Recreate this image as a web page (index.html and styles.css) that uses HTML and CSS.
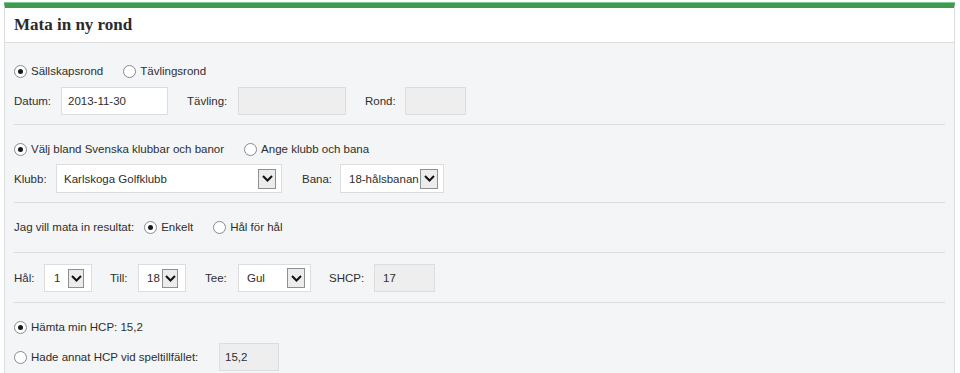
FILE: index.html
```html
<!DOCTYPE html>
<html lang="sv">
<head>
<meta charset="utf-8">
<title>Mata in ny rond</title>
<link rel="stylesheet" href="styles.css">
</head>
<body>
<div class="panel">
  <div class="header"><h1 class="title">Mata in ny rond</h1></div>
  <div class="content">
    <div class="section s1">
      <div class="row">
        <span class="opt"><span class="radio checked"></span>Sällskapsrond</span>
        <span class="opt"><span class="radio"></span>Tävlingsrond</span>
      </div>
      <div class="row fields f28">
        <span class="lbl w-datum">Datum:</span>
        <span class="input w107 pad6">2013-11-30</span>
        <span class="lbl w-tavling ml19">Tävling:</span>
        <span class="input gray w108"></span>
        <span class="lbl w-rond ml19">Rond:</span>
        <span class="input gray w61"></span>
      </div>
    </div>
    <div class="section s2">
      <div class="row">
        <span class="opt"><span class="radio checked"></span>Välj bland Svenska klubbar och banor</span>
        <span class="opt"><span class="radio"></span>Ange klubb och bana</span>
      </div>
      <div class="row fields f29">
        <span class="lbl w-klubb">Klubb:</span>
        <span class="select w226 pad7"><span class="val">Karlskoga Golfklubb</span><span class="arrow"><svg width="11" height="7" viewBox="0 0 11 7"><path d="M1 1l4.5 4.5L10 1" fill="none" stroke="#111" stroke-width="2"/></svg></span></span>
        <span class="lbl w-bana ml20">Bana:</span>
        <span class="select w104 pad8"><span class="val">18-hålsbanan</span><span class="arrow"><svg width="11" height="7" viewBox="0 0 11 7"><path d="M1 1l4.5 4.5L10 1" fill="none" stroke="#111" stroke-width="2"/></svg></span></span>
      </div>
    </div>
    <div class="section s3">
      <div class="row">
        <span class="lbl mr10">Jag vill mata in resultat:</span>
        <span class="opt"><span class="radio checked"></span>Enkelt</span>
        <span class="opt"><span class="radio"></span>Hål för hål</span>
      </div>
    </div>
    <div class="section s4">
      <div class="row f28">
        <span class="lbl w-hal">Hål:</span>
        <span class="select w48 pad9 sm"><span class="val">1</span><span class="arrow"><svg width="11" height="7" viewBox="0 0 11 7"><path d="M1 1l4.5 4.5L10 1" fill="none" stroke="#111" stroke-width="2"/></svg></span></span>
        <span class="lbl w-till ml18">Till:</span>
        <span class="select w48 pad8 sm"><span class="val">18</span><span class="arrow"><svg width="11" height="7" viewBox="0 0 11 7"><path d="M1 1l4.5 4.5L10 1" fill="none" stroke="#111" stroke-width="2"/></svg></span></span>
        <span class="lbl w-tee ml19">Tee:</span>
        <span class="select w73 pad8"><span class="val">Gul</span><span class="arrow"><svg width="11" height="7" viewBox="0 0 11 7"><path d="M1 1l4.5 4.5L10 1" fill="none" stroke="#111" stroke-width="2"/></svg></span></span>
        <span class="lbl w-shcp ml18">SHCP:</span>
        <span class="input gray w61 pad8">17</span>
      </div>
    </div>
    <div class="section s5">
      <div class="row">
        <span class="opt"><span class="radio checked"></span>Hämta min HCP: 15,2</span>
      </div>
      <div class="row fields f28 hcp">
        <span class="opt w-hade"><span class="radio"></span>Hade annat HCP vid speltillfället:</span>
        <span class="input gray w60 pad5">15,2</span>
      </div>
    </div>
  </div>
</div>
</body>
</html>
```
FILE: styles.css
```css
html, body {
  margin: 0;
  padding: 0;
  background: #ffffff;
}
body {
  font-family: "Liberation Sans", Arial, sans-serif;
  font-size: 11.5px;
  color: #2e2e2e;
  height: 373px;
  overflow: hidden;
}
.panel {
  margin: 3px 0 0 4px;
  width: 949px;
  border-left: 1px solid #dddddd;
  border-right: 1px solid #dddddd;
  border-top: 5px solid #3f9b52;
  box-shadow: 0 -1px 0 #86c893;
  background: #f4f5f7;
}
.header {
  height: 34px;
  background: #ffffff;
  border-bottom: 1px solid #dcdcdc;
  display: flex;
  align-items: center;
  padding-left: 9px;
}
.title {
  margin: 0;
  font-family: "Liberation Serif", "Times New Roman", serif;
  font-weight: bold;
  font-size: 17px;
  color: #2b2b2b;
}
.content {
  padding: 0 9px;
}
.section {
  border-bottom: 1px solid #dcdcdc;
}
.section:last-child {
  border-bottom: none;
}
.s1 { padding: 20px 0 9px; }
.s2 { padding: 16px 0 9px; }
.s3 { padding: 16px 0 17px; }
.s4 { padding: 11px 0 10px; }
.s5 { padding: 16px 0 0; height: 70px; }
.row {
  display: flex;
  align-items: center;
  height: 16px;
}
.row.fields { margin-top: 8px; }
.s2 .row.fields { margin-top: 7px; }
.row.f28 { height: 28px; }
.row.f29 { height: 29px; }
.opt {
  display: inline-flex;
  align-items: center;
  margin-right: 20px;
  white-space: nowrap;
}
.radio {
  width: 11px;
  height: 11px;
  border: 1px solid #8a8a8a;
  border-radius: 50%;
  background: #ffffff;
  margin-right: 4px;
  position: relative;
  flex: none;
}
.radio.checked::after {
  content: "";
  position: absolute;
  left: 3px;
  top: 3px;
  width: 5px;
  height: 5px;
  border-radius: 50%;
  background: #1a1a1a;
}
.lbl { flex: none; white-space: nowrap; }
.mr10 { margin-right: 10px; }
.ml18 { margin-left: 18px; }
.ml19 { margin-left: 19px; }
.ml20 { margin-left: 20px; }
.w-datum { width: 47px; }
.w-tavling { width: 51px; }
.w-rond { width: 40px; }
.w-klubb { width: 42px; }
.w-bana { width: 38px; }
.w-hal { width: 30px; }
.w-till { width: 28px; }
.w-tee { width: 33px; }
.w-shcp { width: 45px; }
.w-hade { width: 205px; margin-right: 0; }
.input, .select {
  box-sizing: border-box;
  height: 100%;
  border: 1px solid #dddddd;
  background: #ffffff;
  display: inline-flex;
  align-items: center;
  flex: none;
}
.input.gray {
  background: #eeeeee;
}
.w48 { width: 48px; }
.w60 { width: 60px; }
.w61 { width: 61px; }
.w73 { width: 73px; }
.w104 { width: 104px; }
.w107 { width: 107px; }
.w108 { width: 108px; }
.w226 { width: 226px; }
.pad5 { padding-left: 5px; }
.pad6 { padding-left: 6px; }
.pad7 { padding-left: 7px; }
.pad8 { padding-left: 8px; }
.pad9 { padding-left: 9px; }
.select {
  justify-content: space-between;
  padding-right: 5px;
}
.select.sm { padding-right: 7px; }
.val {
  white-space: nowrap;
  overflow: hidden;
}
.arrow {
  box-sizing: border-box;
  width: 18px;
  height: 20px;
  border: 1px solid #8f8f8f;
  background: #ececec;
  display: inline-flex;
  align-items: center;
  justify-content: center;
  flex: none;
}
.sm .arrow { width: 16px; height: 19px; }
```
